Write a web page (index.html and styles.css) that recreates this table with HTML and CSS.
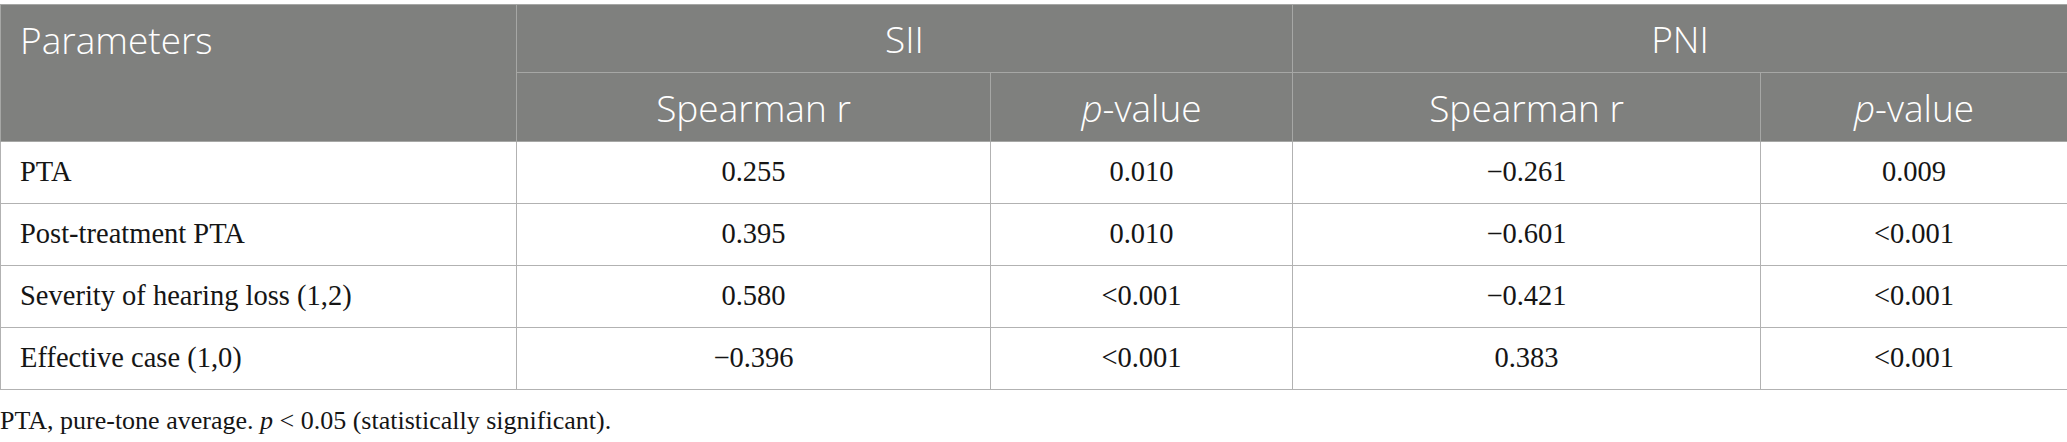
FILE: index.html
```html
<!DOCTYPE html>
<html lang="en">
<head>
<meta charset="utf-8">
<title>Correlation of SII and PNI</title>
<link rel="stylesheet" href="styles.css">
</head>
<body>
<table class="corr">
  <colgroup>
    <col class="c-param">
    <col class="c-sr1">
    <col class="c-pv1">
    <col class="c-sr2">
    <col class="c-pv2">
  </colgroup>
  <thead>
    <tr class="h-top">
      <th rowspan="2" class="param-head">Parameters</th>
      <th colspan="2">SII</th>
      <th colspan="2">PNI</th>
    </tr>
    <tr class="h-sub">
      <th>Spearman r</th>
      <th><i>p</i>-value</th>
      <th>Spearman r</th>
      <th><i>p</i>-value</th>
    </tr>
  </thead>
  <tbody>
    <tr>
      <td class="name">PTA</td>
      <td>0.255</td>
      <td>0.010</td>
      <td>&minus;0.261</td>
      <td>0.009</td>
    </tr>
    <tr>
      <td class="name">Post-treatment PTA</td>
      <td>0.395</td>
      <td>0.010</td>
      <td>&minus;0.601</td>
      <td>&lt;0.001</td>
    </tr>
    <tr>
      <td class="name">Severity of hearing loss (1,2)</td>
      <td>0.580</td>
      <td>&lt;0.001</td>
      <td>&minus;0.421</td>
      <td>&lt;0.001</td>
    </tr>
    <tr>
      <td class="name">Effective case (1,0)</td>
      <td>&minus;0.396</td>
      <td>&lt;0.001</td>
      <td>0.383</td>
      <td>&lt;0.001</td>
    </tr>
  </tbody>
</table>
<p class="note">PTA, pure-tone average. <i>p</i> &lt; 0.05 (statistically significant).</p>
</body>
</html>
```

FILE: styles.css
```css
html, body {
  margin: 0;
  padding: 0;
  background: #ffffff;
}

.corr {
  border-collapse: collapse;
  table-layout: fixed;
  width: 2067px;
  margin-top: 4px;
}

.c-param { width: 516px; }
.c-sr1 { width: 474px; }
.c-pv1 { width: 302px; }
.c-sr2 { width: 468px; }
.c-pv2 { width: 307px; }

.corr th {
  background: #7f807e;
  color: #ffffff;
  font-family: "Open Sans", "Noto Sans", sans-serif;
  font-weight: 300;
  font-size: 37px;
  text-align: center;
  vertical-align: middle;
  border: 1px solid #a6a7a5;
  padding: 0;
  line-height: 1;
}

.h-top th { height: 67px; }
.h-sub th { height: 68px; }

.corr th.param-head {
  text-align: left;
  vertical-align: top;
  padding: 16px 0 0 19px;
}

.corr td {
  font-family: "Liberation Serif", "Times New Roman", serif;
  font-size: 28.5px;
  color: #151515;
  text-align: center;
  vertical-align: middle;
  border: 1px solid #b2b2b2;
  height: 61px;
  padding: 0;
  line-height: 1;
}

.corr td.name {
  text-align: left;
  padding-left: 19px;
}

.note {
  margin: 18px 0 0 0;
  font-family: "Liberation Serif", "Times New Roman", serif;
  font-size: 26px;
  line-height: 1;
  color: #151515;
}
```
